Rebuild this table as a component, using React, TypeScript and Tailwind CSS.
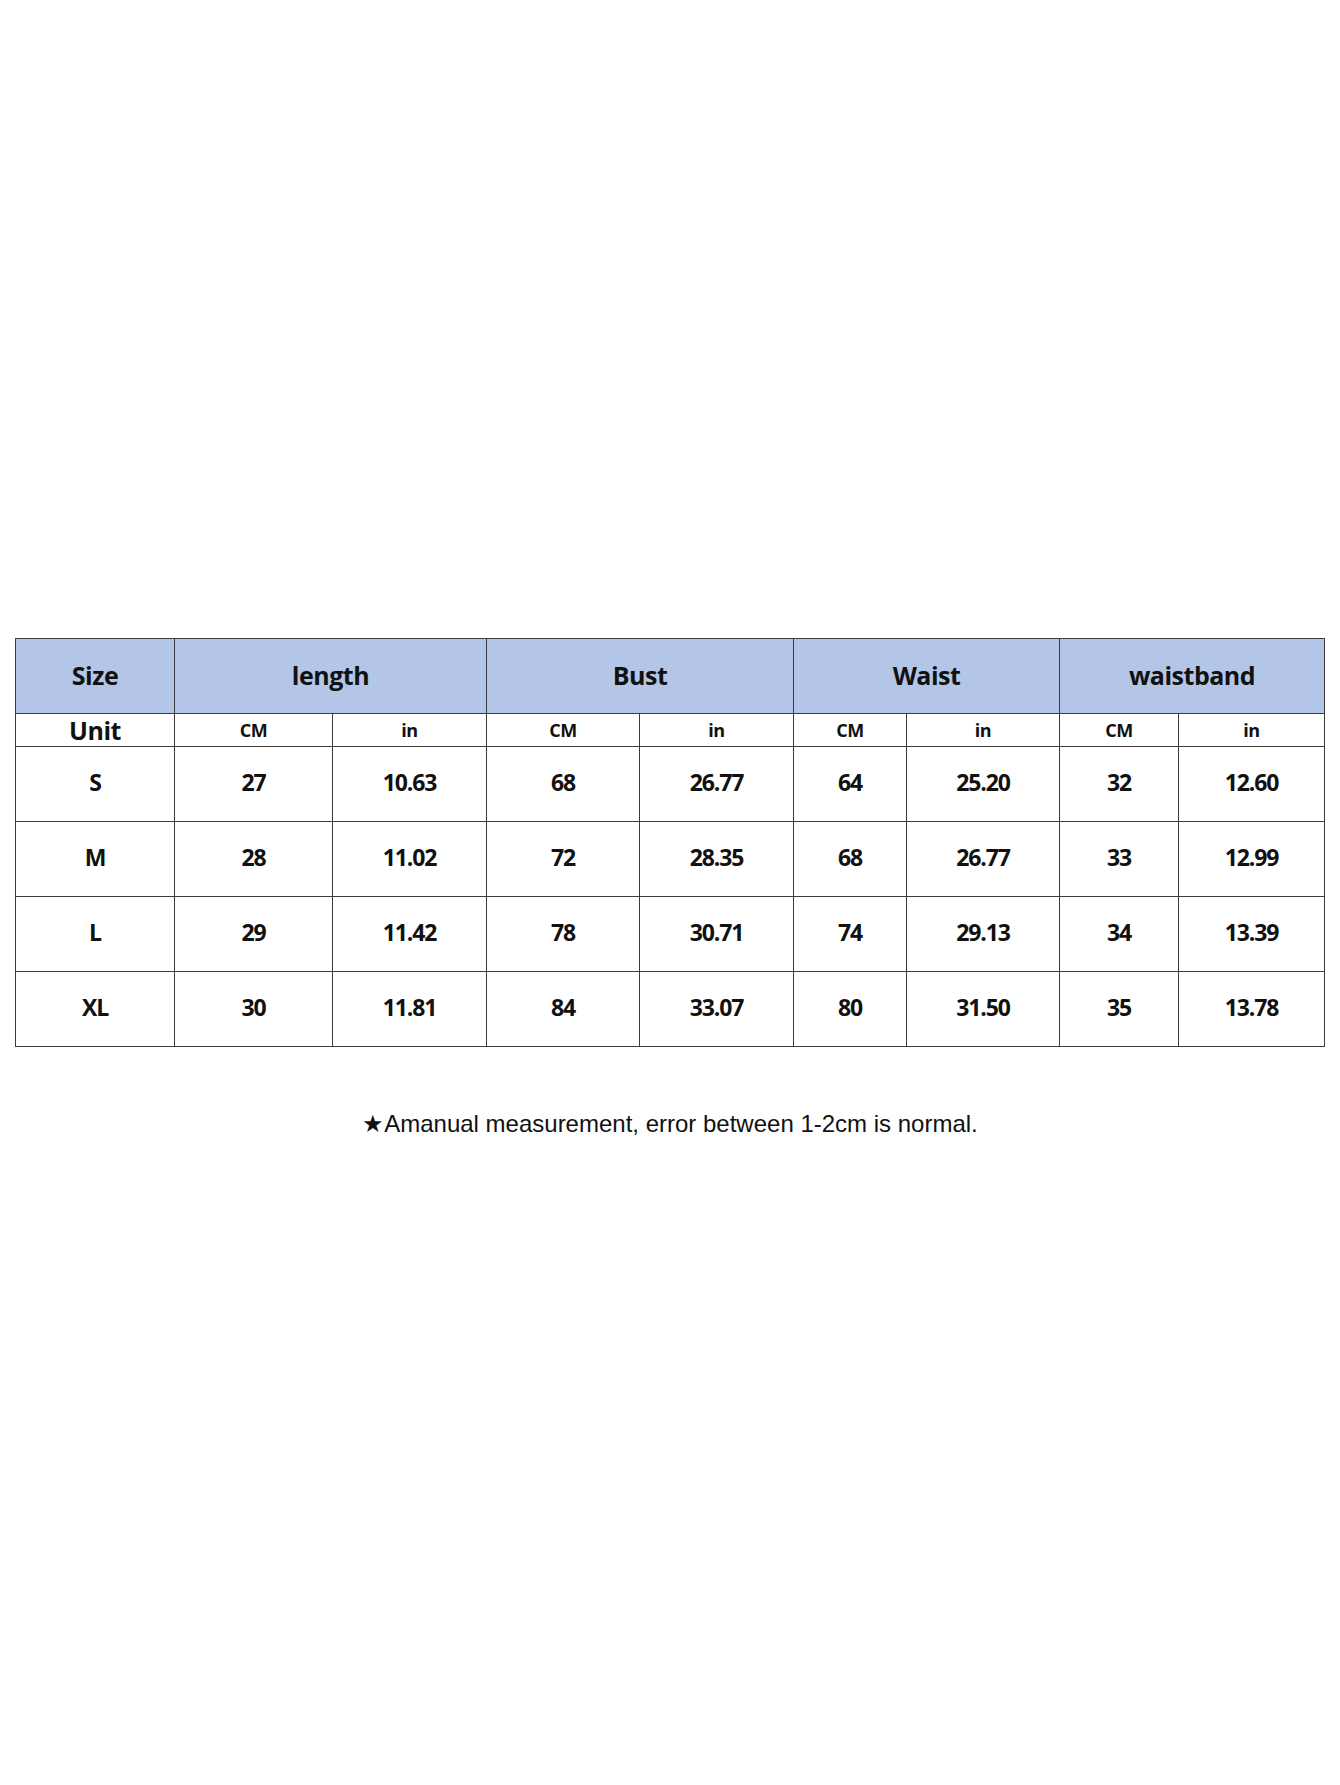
const cols = [159, 158, 154, 153, 154, 113, 153, 119, 146]

const groups = [
  { label: 'length', span: 2 },
  { label: 'Bust', span: 2 },
  { label: 'Waist', span: 2 },
  { label: 'waistband', span: 2 },
]

const rows = [
  ['S', '27', '10.63', '68', '26.77', '64', '25.20', '32', '12.60'],
  ['M', '28', '11.02', '72', '28.35', '68', '26.77', '33', '12.99'],
  ['L', '29', '11.42', '78', '30.71', '74', '29.13', '34', '13.39'],
  ['XL', '30', '11.81', '84', '33.07', '80', '31.50', '35', '13.78'],
]

const cell = 'border border-[#3c3c3c] text-center align-middle p-0'

export default function App() {
  return (
    <div className="min-h-[1785px] w-[1340px] bg-white pt-[638px]">
      <div className="pl-[15px]">
        <table
          className="table-fixed border-collapse text-[#111] font-bold tracking-[-0.03em]"
          style={{ width: 1309, fontFamily: '"Open Sans", "Noto Sans", sans-serif' }}
        >
          <colgroup>
            {cols.map((w, i) => (
              <col key={i} style={{ width: w }} />
            ))}
          </colgroup>
          <thead>
            <tr className="h-[75px] bg-[#b4c6e7] text-[25px]">
              <th className={`${cell} font-bold`}>Size</th>
              {groups.map((g) => (
                <th key={g.label} colSpan={g.span} className={`${cell} font-bold`}>
                  {g.label}
                </th>
              ))}
            </tr>
            <tr className="h-[33px]">
              <th className={`${cell} text-[25px] font-bold leading-none`}>Unit</th>
              {groups.map((g) => [
                <th key={g.label + 'cm'} className={`${cell} text-[18px] font-bold leading-none`}>
                  CM
                </th>,
                <th key={g.label + 'in'} className={`${cell} text-[18px] font-bold leading-none`}>
                  in
                </th>,
              ])}
            </tr>
          </thead>
          <tbody>
            {rows.map((r) => (
              <tr key={r[0]} className="h-[75px] text-[23px]">
                {r.map((v, i) => (
                  <td key={i} className={`${cell} pb-[3px] tracking-[-0.05em]`}>
                    {v}
                  </td>
                ))}
              </tr>
            ))}
          </tbody>
        </table>
      </div>
      <p
        className="mt-[59px] text-center text-[24px] text-[#111]"
        style={{ fontFamily: '"Liberation Sans", Arial, sans-serif' }}
      >
        ★Amanual measurement, error between 1-2cm is normal.
      </p>
    </div>
  )
}
